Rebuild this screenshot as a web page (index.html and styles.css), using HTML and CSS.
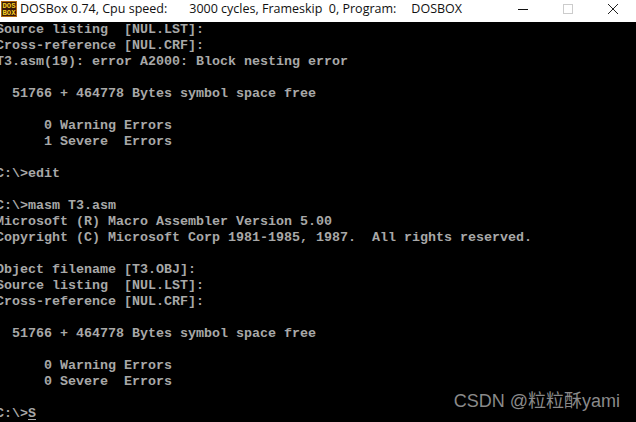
FILE: index.html
```html
<!DOCTYPE html>
<html lang="en">
<head>
<meta charset="utf-8">
<title>DOSBox</title>
<link rel="stylesheet" href="styles.css">
</head>
<body>
<div class="window">
  <header class="titlebar">
    <svg class="app-icon" width="16" height="16" viewBox="0 0 16 16" aria-hidden="true">
      <rect width="16" height="16" fill="#b06a10"/>
      <rect x="1" y="1" width="14" height="14" fill="#3a1808"/>
      <text class="icon-text" x="8" y="7" textLength="13" lengthAdjust="spacingAndGlyphs">DOS</text>
      <text class="icon-text" x="8" y="14" textLength="13" lengthAdjust="spacingAndGlyphs">BOX</text>
    </svg>
    <span class="t-app">DOSBox 0.74, Cpu speed:</span>
    <span class="t-cycles">3000 cycles, Frameskip&nbsp; 0, Program:</span>
    <span class="t-prog">DOSBOX</span>
    <div class="controls">
      <svg class="ctl" width="10" height="10" viewBox="0 0 10 10" aria-hidden="true"><path d="M0 5.500h10" stroke="#111" fill="none"/></svg>
      <svg class="ctl" width="10" height="10" viewBox="0 0 10 10" aria-hidden="true"><rect x=".5" y=".5" width="9" height="9" stroke="#ccc" fill="none"/></svg>
      <svg class="ctl" width="10" height="10" viewBox="0 0 10 10" aria-hidden="true"><path d="M0 0l10 10M10 0L0 10" stroke="#222" fill="none"/></svg>
    </div>
  </header>
  <pre class="console">Source listing  [NUL.LST]:
Cross-reference [NUL.CRF]:
T3.asm(19): error A2000: Block nesting error

  51766 + 464778 Bytes symbol space free

      0 Warning Errors
      1 Severe  Errors

C:\&gt;edit

C:\&gt;masm T3.asm
Microsoft (R) Macro Assembler Version 5.00
Copyright (C) Microsoft Corp 1981-1985, 1987.  All rights reserved.

Object filename [T3.OBJ]:
Source listing  [NUL.LST]:
Cross-reference [NUL.CRF]:

  51766 + 464778 Bytes symbol space free

      0 Warning Errors
      0 Severe  Errors

C:\&gt;<span class="cursor">S</span></pre>
  <div class="watermark">CSDN @粒粒酥yami</div>
</div>
</body>
</html>
```
FILE: styles.css
```css
html, body {
  margin: 0;
  padding: 0;
  background: #000;
}
.window {
  position: relative;
  width: 636px;
  height: 422px;
  overflow: hidden;
  background: #000;
}
.titlebar {
  display: flex;
  align-items: center;
  height: 18px;
  padding-bottom: 4px;
  background: #fff;
  color: #111;
  font: 12.5px/18px "Open Sans", "Noto Sans", sans-serif;
  white-space: nowrap;
}
.app-icon {
  margin-left: 1px;
  flex: none;
}
.icon-text {
  font: bold 7px "Liberation Mono", monospace;
  fill: #f6d020;
  text-anchor: middle;
}
.t-app { margin-left: 3px; }
.t-cycles { margin-left: 22px; }
.t-prog { margin-left: 15px; }
.controls {
  margin-left: auto;
  display: flex;
  gap: 35px;
  margin-right: 18px;
}
.console {
  margin: 0 0 0 -4px;
  font: bold 13.33px/16px "Liberation Mono", monospace;
  color: #a8a8a8;
}
.cursor {
  text-decoration: underline;
  text-underline-offset: 2px;
}
.watermark {
  position: absolute;
  right: 16px;
  bottom: 10px;
  font: 18px/22px "Liberation Sans", "Noto Sans CJK SC", sans-serif;
  color: #8a8a8a;
}
```
